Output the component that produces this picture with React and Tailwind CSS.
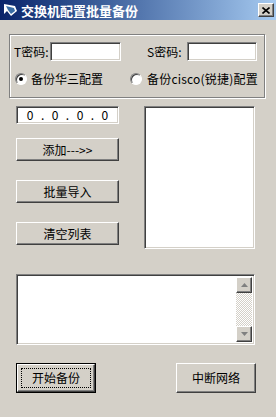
import React from "react";

const font = { fontFamily: '"Noto Sans CJK SC", "Noto Sans", sans-serif' };

// sunken 3D field (Win2k style)
const sunken =
  "bg-white border border-t-[#808080] border-l-[#808080] border-b-white border-r-white shadow-[inset_1px_1px_0_#404040,inset_-1px_-1px_0_#d4d0c8]";
// raised 3D button
const raised =
  "bg-[#d4d0c8] border border-t-white border-l-white border-b-[#404040] border-r-[#404040] shadow-[inset_-1px_-1px_0_#808080]";

const Button = ({ children, className = "" }) => (
  <div className={`${raised} flex items-center justify-center text-[12px] text-black ${className}`}>
    {children}
  </div>
);

const Radio = ({ checked }) => (
  <div className="w-[12px] h-[12px] rounded-full bg-white border border-t-[#808080] border-l-[#808080] border-b-white border-r-white shadow-[inset_1px_1px_0_#404040] flex items-center justify-center">
    {checked && <div className="w-[4px] h-[4px] rounded-full bg-black" />}
  </div>
);

const ArrowBox = ({ up }) => (
  <div className={`${raised} w-[16px] h-[16px] flex items-center justify-center`}>
    <svg width="7" height="4" viewBox="0 0 7 4">
      {up ? (
        <polygon points="3.5,0 7,4 0,4" fill="#808080" />
      ) : (
        <polygon points="0,0 7,0 3.5,4" fill="#808080" />
      )}
    </svg>
  </div>
);

export default function App() {
  return (
    <div className="w-[276px] h-[417px] bg-[#d4d0c8] overflow-hidden" style={font}>
      {/* title bar */}
      <div className="h-[20px] flex items-center bg-gradient-to-r from-[#0a246a] to-[#a6caf0] pl-[2px] pr-[2px]">
        <svg width="16" height="16" viewBox="0 0 16 16">
          <polygon points="2,2 13,4 15,9 9,14 5,9 2,12" fill="#ffffff" />
          <polygon points="4,4 12,6 13,9 9,12 6,8" fill="#3a6ea5" />
        </svg>
        <span className="ml-[3px] text-white text-[13px] font-bold leading-none">
          交换机配置批量备份
        </span>
        <div className={`${raised} ml-auto w-[16px] h-[14px] flex items-center justify-center`}>
          <svg width="8" height="7" viewBox="0 0 8 7">
            <path d="M0.5 0.5 L7.5 6.5 M7.5 0.5 L0.5 6.5" stroke="#000" strokeWidth="1.6" />
          </svg>
        </div>
      </div>

      {/* group box */}
      <div className="mt-[14px] ml-[9px] w-[256px] h-[64px] border border-[#808080] shadow-[inset_1px_1px_0_#fff,1px_1px_0_#fff] pt-[7px]">
        <div className="flex items-center pl-[4px] text-[12px] text-black">
          <span className="w-[36px] leading-none">T密码:</span>
          <div className={`${sunken} w-[71px] h-[19px]`} />
          <span className="ml-[26px] w-[40px] leading-none">S密码:</span>
          <div className={`${sunken} w-[70px] h-[19px]`} />
        </div>
        <div className="mt-[11px] flex items-center text-[12px] text-black h-[14px]">
          <div className="ml-[5px]">
            <Radio checked />
          </div>
          <span className="ml-[4px] leading-none">备份华三配置</span>
          <div className="ml-[27px]">
            <Radio />
          </div>
          <span className="ml-[5px] leading-none tracking-[0.2px]">备份cisco(锐捷)配置</span>
        </div>
      </div>

      {/* middle */}
      <div className="mt-[8px] ml-[16px] flex">
        <div className="w-[103px] flex flex-col">
          <div className={`${sunken} h-[18px] flex items-center justify-around px-[6px] text-[12px] leading-none`}>
            <span>0</span>
            <span>.</span>
            <span>0</span>
            <span>.</span>
            <span>0</span>
            <span>.</span>
            <span>0</span>
          </div>
          <Button className="mt-[14px] h-[23px]">添加---&gt;&gt;</Button>
          <Button className="mt-[19px] h-[23px]">批量导入</Button>
          <Button className="mt-[19px] h-[23px]">清空列表</Button>
        </div>
        <div className={`${sunken} ml-[25px] w-[111px] h-[143px]`} />
      </div>

      {/* edit box */}
      <div className={`${sunken} mt-[25px] ml-[16px] w-[239px] h-[71px] flex justify-end p-[2px]`}>
        <div className="w-[16px] h-full flex flex-col justify-between bg-[image:repeating-conic-gradient(#ffffff_0_25%,#d4d0c8_0_50%)] bg-[length:2px_2px]">
          <ArrowBox up />
          <ArrowBox />
        </div>
      </div>

      {/* bottom buttons */}
      <div className="mt-[18px] ml-[16px] w-[240px] flex justify-between">
        <div className="w-[80px] h-[30px] border border-black">
          <Button className="w-full h-full relative">
            <div className="absolute inset-[3px] border border-dotted border-black" />
            <span className="relative">开始备份</span>
          </Button>
        </div>
        <Button className="w-[80px] h-[30px]">中断网络</Button>
      </div>
    </div>
  );
}
